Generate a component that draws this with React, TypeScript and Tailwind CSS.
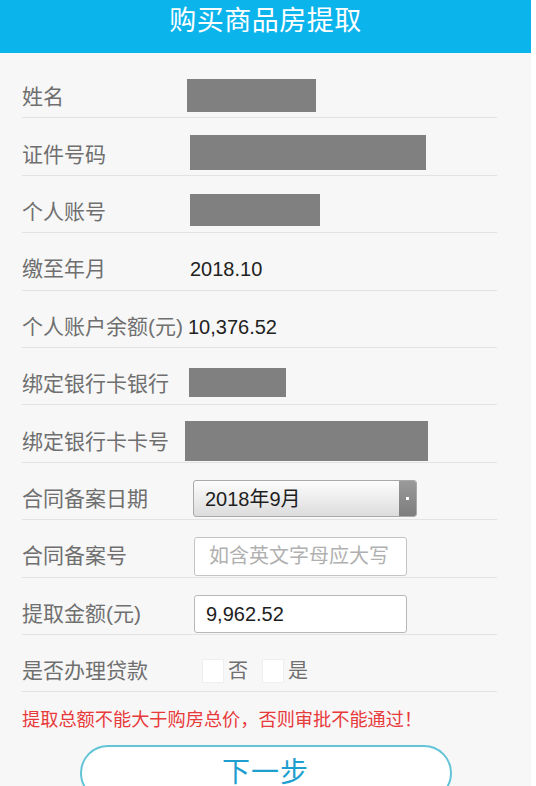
import React from 'react';

const FONT = '"Liberation Sans", "Noto Sans CJK SC", sans-serif';

function Row({ label, children }: { label: string; children?: React.ReactNode }) {
  return (
    <div className="flex items-center h-[57.4px] pt-[16px] border-b border-[#e3e3e3]">
      <div className="w-[168px] shrink-0 text-[21px] leading-[28px] text-[#6f6f6f] whitespace-nowrap">{label}</div>
      <div className="flex items-center flex-1 text-[20px] leading-[28px] text-[#222]">{children}</div>
    </div>
  );
}

function Masked({ className }: { className: string }) {
  return <div className={`bg-[#808080] ${className}`} />;
}

export default function App() {
  return (
    <div className="w-[536px] h-[786px] overflow-hidden bg-white flex" style={{ fontFamily: FONT }}>
      <div className="w-[531px] h-full bg-[#f7f7f7] flex flex-col">
        <header className="h-[53px] shrink-0 bg-[#0cb4ec] flex justify-center pt-[3px]">
          <span className="text-white text-[27px] leading-[36px] tracking-[0.5px]">购买商品房提取</span>
        </header>

        <section className="pl-[22px] pr-[34px] pt-[8px]">
          <Row label="姓名">
            <Masked className="ml-[-3px] w-[129px] h-[33px] mt-[-4px]" />
          </Row>
          <Row label="证件号码">
            <Masked className="w-[236px] h-[35px] mt-[-4px]" />
          </Row>
          <Row label="个人账号">
            <Masked className="w-[130px] h-[32px] mt-[-4px]" />
          </Row>
          <Row label="缴至年月">
            <span>2018.10</span>
          </Row>
          <Row label="个人账户余额(元)">
            <span className="ml-[-2px]">10,376.52</span>
          </Row>
          <Row label="绑定银行卡银行">
            <Masked className="ml-[-1px] w-[97px] h-[29px] mt-[-4px]" />
          </Row>
          <Row label="绑定银行卡卡号">
            <Masked className="ml-[-5px] w-[243px] h-[40px] mt-[-2px]" />
          </Row>
          <Row label="合同备案日期">
            <div className="ml-[3px] w-[224px] h-[37px] flex items-stretch rounded-[3px] border border-[#a9a9a9] overflow-hidden bg-gradient-to-b from-[#fdfdfd] to-[#dcdcdc]">
              <span className="flex-1 pl-[11px] flex items-center text-[20px] text-[#1e1e1e]">2018年9月</span>
              <div className="w-[17px] bg-gradient-to-b from-[#9a9a9a] to-[#7d7d7d] flex items-center justify-center">
                <div className="w-[3px] h-[3px] bg-white" />
              </div>
            </div>
          </Row>
          <Row label="合同备案号">
            <div className="ml-[4px] w-[213px] h-[39px] flex items-center rounded-[3px] border border-[#c4c4c4] bg-white pl-[14px] text-[20px] text-[#b0b0b0] whitespace-nowrap overflow-hidden">
              如含英文字母应大写
            </div>
          </Row>
          <Row label="提取金额(元)">
            <div className="ml-[4px] w-[213px] h-[38px] flex items-center rounded-[3px] border border-[#b8b8b8] bg-white pl-[11px] text-[20px] text-[#1e1e1e]">
              9,962.52
            </div>
          </Row>
          <Row label="是否办理贷款">
            <div className="ml-[12px] w-[22px] h-[24px] bg-white border border-[#efefef]" />
            <span className="ml-[4px] text-[#6f6f6f]">否</span>
            <div className="ml-[14px] w-[22px] h-[24px] bg-white border border-[#efefef]" />
            <span className="ml-[4px] text-[#6f6f6f]">是</span>
          </Row>
        </section>

        <p className="mt-[16px] pl-[22px] text-[18.2px] leading-[24px] text-[#e8393b] whitespace-nowrap">
          提取总额不能大于购房总价，否则审批不能通过！
        </p>

        <div className="flex justify-center mt-[13px]">
          <button className="w-[372px] h-[56px] rounded-full border-2 border-[#62c4d6] bg-white flex justify-center items-center">
            <span className="text-[28px] leading-[36px] text-[#1e9fcf] tracking-[1px]">下一步</span>
          </button>
        </div>
      </div>
    </div>
  );
}
